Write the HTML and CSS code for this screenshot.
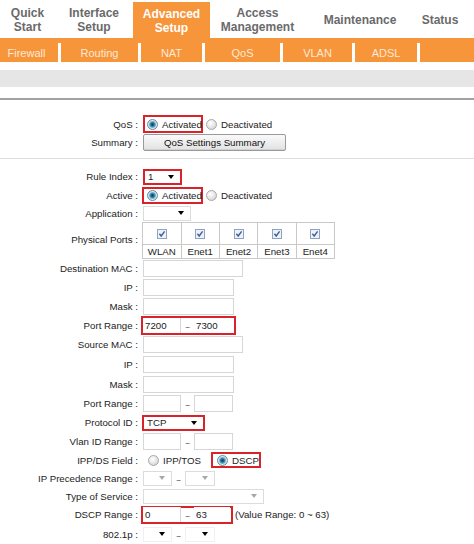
FILE: index.html
```html
<!DOCTYPE html>
<html>
<head>
<meta charset="utf-8">
<link rel="stylesheet" href="styles.css">
</head>
<body>
<div class="tabs">
  <div class="tab t1">Quick<br>Start</div>
  <div class="tab t2">Interface<br>Setup</div>
  <div class="tab t3 active">Advanced<br>Setup</div>
  <div class="tab t4">Access<br>Management</div>
  <div class="tab t5">Maintenance</div>
  <div class="tab t6">Status</div>
</div>
<div class="sub">
  <div class="si s1">Firewall</div><span class="sep"></span>
  <div class="si s2">Routing</div><span class="sep"></span>
  <div class="si s3">NAT</div><span class="sep"></span>
  <div class="si s4">QoS</div><span class="sep"></span>
  <div class="si s5">VLAN</div><span class="sep"></span>
  <div class="si s6">ADSL</div><span class="sep"></span>
  <div class="si s7"></div>
</div>
<div class="graybar"></div>
<div class="rule"></div>

<div class="form">
  <div class="row h18">
    <div class="lab">QoS :</div>
    <div class="val">
      <span class="rb rb-qos"><span class="radio on"></span><span class="rt">Activated</span></span>
      <span class="radio off ml3"></span><span class="rt">Deactivated</span>
    </div>
  </div>
  <div class="row h19">
    <div class="lab">Summary :</div>
    <div class="val"><button class="btn">QoS Settings Summary</button></div>
  </div>
  <div class="hr"></div>
  <div class="row h19">
    <div class="lab">Rule Index :</div>
    <div class="val">
      <span class="rb rb-idx"><span class="sel w35 nob"><span class="st">1</span><span class="arr"></span></span></span>
    </div>
  </div>
  <div class="row h19">
    <div class="lab">Active :</div>
    <div class="val">
      <span class="rb rb-act"><span class="radio on"></span><span class="rt">Activated</span></span>
      <span class="radio off ml3"></span><span class="rt">Deactivated</span>
    </div>
  </div>
  <div class="row h16">
    <div class="lab">Application :</div>
    <div class="val"><span class="sel w48 m2"><span class="st"></span><span class="arr"></span></span></div>
  </div>
  <div class="row h37">
    <div class="lab">Physical Ports :</div>
    <div class="val top1">
      <table class="ports">
        <tr class="cbr">
          <td><svg class="cb" width="10" height="10" viewBox="0 0 10 10"><rect x="0.5" y="0.5" width="9" height="9" fill="#eef2f8" stroke="#8ea3be"/><path d="M2.4 4.8 L4.2 7 L7.6 2.4" stroke="#3b5f9e" stroke-width="1.4" fill="none"/></svg></td>
          <td><svg class="cb" width="10" height="10" viewBox="0 0 10 10"><rect x="0.5" y="0.5" width="9" height="9" fill="#eef2f8" stroke="#8ea3be"/><path d="M2.4 4.8 L4.2 7 L7.6 2.4" stroke="#3b5f9e" stroke-width="1.4" fill="none"/></svg></td>
          <td><svg class="cb" width="10" height="10" viewBox="0 0 10 10"><rect x="0.5" y="0.5" width="9" height="9" fill="#eef2f8" stroke="#8ea3be"/><path d="M2.4 4.8 L4.2 7 L7.6 2.4" stroke="#3b5f9e" stroke-width="1.4" fill="none"/></svg></td>
          <td><svg class="cb" width="10" height="10" viewBox="0 0 10 10"><rect x="0.5" y="0.5" width="9" height="9" fill="#eef2f8" stroke="#8ea3be"/><path d="M2.4 4.8 L4.2 7 L7.6 2.4" stroke="#3b5f9e" stroke-width="1.4" fill="none"/></svg></td>
          <td><svg class="cb" width="10" height="10" viewBox="0 0 10 10"><rect x="0.5" y="0.5" width="9" height="9" fill="#eef2f8" stroke="#8ea3be"/><path d="M2.4 4.8 L4.2 7 L7.6 2.4" stroke="#3b5f9e" stroke-width="1.4" fill="none"/></svg></td>
        </tr>
        <tr class="lbr">
          <td>WLAN</td><td>Enet1</td><td>Enet2</td><td>Enet3</td><td>Enet4</td>
        </tr>
      </table>
    </div>
  </div>
  <div class="row h20">
    <div class="lab">Destination MAC :</div>
    <div class="val"><span class="inp w100 m2"></span></div>
  </div>
  <div class="row h19">
    <div class="lab">IP :</div>
    <div class="val"><span class="inp w91 m2"></span></div>
  </div>
  <div class="row h19">
    <div class="lab">Mask :</div>
    <div class="val"><span class="inp w91 m2"></span></div>
  </div>
  <div class="row h18">
    <div class="lab">Port Range :</div>
    <div class="val">
      <span class="rb rb-port"><span class="inp w38 in">7200</span><span class="tl">~</span><span class="inp w39 in">7300</span></span>
    </div>
  </div>
  <div class="row h20">
    <div class="lab">Source MAC :</div>
    <div class="val"><span class="inp w100 m2"></span></div>
  </div>
  <div class="row h20">
    <div class="lab">IP :</div>
    <div class="val"><span class="inp w91 m2"></span></div>
  </div>
  <div class="row h20">
    <div class="lab">Mask :</div>
    <div class="val"><span class="inp w91 m2"></span></div>
  </div>
  <div class="row h19">
    <div class="lab">Port Range :</div>
    <div class="val"><span class="inp w38 m2"></span><span class="tl">~</span><span class="inp w39"></span></div>
  </div>
  <div class="row h19">
    <div class="lab">Protocol ID :</div>
    <div class="val">
      <span class="rb rb-proto"><span class="sel w59 nob"><span class="st">TCP</span><span class="arr"></span></span></span>
    </div>
  </div>
  <div class="row h19">
    <div class="lab">Vlan ID Range :</div>
    <div class="val"><span class="inp w38 m2"></span><span class="tl">~</span><span class="inp w39"></span></div>
  </div>
  <div class="row h18">
    <div class="lab">IPP/DS Field :</div>
    <div class="val">
      <span class="radio off ml9"></span><span class="rt">IPP/TOS</span>
      <span class="rb rb-dscp"><span class="radio on"></span><span class="rt">DSCP</span></span>
    </div>
  </div>
  <div class="row h18">
    <div class="lab">IP Precedence Range :</div>
    <div class="val">
      <span class="sel w28 m2"><span class="st"></span><span class="arr gray"></span></span><span class="tl">~</span><span class="sel w30 m0"><span class="st"></span><span class="arr gray"></span></span>
    </div>
  </div>
  <div class="row h18">
    <div class="lab">Type of Service :</div>
    <div class="val"><span class="sel w121 m2"><span class="st"></span><span class="arr gray"></span></span></div>
  </div>
  <div class="row h19">
    <div class="lab">DSCP Range :</div>
    <div class="val">
      <span class="rb rb-dscpr"><span class="inp w38 in">0</span><span class="tl">~</span><span class="inp w36 in">63</span></span><span class="note">(Value Range: 0 ~ 63)</span>
    </div>
  </div>
  <div class="row h20">
    <div class="lab">802.1p :</div>
    <div class="val">
      <span class="sel w28 m2 faint"><span class="st"></span><span class="arr"></span></span><span class="tl">~</span><span class="sel w30 m0 faint"><span class="st"></span><span class="arr"></span></span>
    </div>
  </div>
</div>
</body>
</html>
```

FILE: styles.css
```css
html, body {
  margin: 0;
  padding: 0;
  background: #fff;
}
body {
  font-family: "Liberation Sans", Arial, sans-serif;
  width: 474px;
  height: 544px;
  overflow: hidden;
}

/* top tabs */
.tabs {
  display: flex;
  height: 38px;
}
.tab {
  display: flex;
  align-items: center;
  justify-content: center;
  text-align: center;
  font-weight: bold;
  font-size: 12px;
  line-height: 14px;
  color: #6a6a6a;
  padding-top: 1px;
  box-sizing: border-box;
}
.t1 { width: 55px; }
.t2 { width: 78px; }
.t3 { width: 77px; }
.t4 { width: 95px; }
.t5 { width: 110px; }
.t6 { width: 50px; }
.tab.active {
  background: #f7953b;
  color: #fff;
  margin-top: 2px;
  height: 36px;
}

/* sub bar */
.sub {
  display: flex;
  height: 24px;
  background: #f7953b;
}
.si {
  display: flex;
  align-items: center;
  justify-content: center;
  padding-top: 5px;
  box-sizing: border-box;
  color: #fde9d6;
  font-size: 11px;
}
.sep {
  width: 3px;
  height: 19px;
  margin-top: 5px;
  background: #fff;
}
.s1 { width: 58px; padding-right: 5px; }
.s2 { width: 77px; }
.s3 { width: 61px; }
.s4 { width: 75px; }
.s5 { width: 69px; }
.s6 { width: 62px; }
.s7 { flex: 1; }

.graybar {
  height: 17px;
  margin-top: 8px;
  background: #e6e6e6;
}
.rule {
  height: 2px;
  margin-top: 11px;
  background: #a2a2a2;
}

/* form */
.form {
  margin-top: 15px;
  font-size: 9.7px;
  color: #222;
}
.row {
  display: flex;
  align-items: center;
}
.h16 { height: 16px; }
.h18 { height: 18px; }
.h19 { height: 19px; }
.h20 { height: 20px; }
.h37 { height: 37px; align-items: flex-start; }
.h37 .lab { align-self: center; }
.lab {
  width: 141px;
  box-sizing: border-box;
  padding-right: 3px;
  text-align: right;
  white-space: nowrap;
}
.val {
  display: flex;
  align-items: center;
}
.top1 { margin-top: 1px; }

.hr {
  height: 1px;
  background: #dedede;
  margin: 6px 0 8px;
}

.rb {
  display: inline-flex;
  align-items: center;
  border: 2px solid #d8232a;
  box-sizing: border-box;
}
.rb-qos { width: 60px; height: 18px; margin-left: 2px; padding-left: 2px; }
.rb-act { width: 61px; height: 17px; margin-left: 1px; padding-left: 3px; }
.rb-idx { width: 39px; height: 16px; margin-left: 2px; }
.rb-port { width: 95px; height: 19px; }
.rb-proto { width: 63px; height: 16px; margin-left: 1px; }
.rb-dscp { width: 50px; height: 16px; margin-left: 10px; padding-left: 4px; }
.rb-dscpr { width: 92px; height: 18px; }

.radio {
  display: inline-block;
  width: 9px;
  height: 9px;
  border-radius: 50%;
  border: 1px solid #a8a8a8;
  background: radial-gradient(circle at 40% 35%, #ffffff 0, #e9e9e9 45%, #c9c9c9 100%);
  flex: none;
}
.radio.on {
  border-color: #6f8a99;
  background: radial-gradient(circle at 50% 50%, #0b3f5a 0, #1e6c91 1.6px, #6fb3d3 3px, #dfe9ee 4px, #c5c5c5 5px);
}
.rt {
  margin-left: 4px;
  white-space: nowrap;
}
.ml3 { margin-left: 3px; }
.ml9 { margin-left: 7px; }

.btn {
  margin-left: 2px;
  width: 143px;
  height: 17px;
  padding: 0;
  font-family: "Liberation Sans", Arial, sans-serif;
  font-size: 9.7px;
  color: #111;
  border: 1px solid #9a9a9a;
  border-radius: 2px;
  background: linear-gradient(#fafafa, #e2e2e2);
  box-shadow: inset 0 -1px 0 #d0d0d0;
}

.sel {
  display: inline-flex;
  align-items: center;
  box-sizing: border-box;
  height: 15px;
  border: 1px solid #dcdcdc;
  background: #fff;
}
.sel.nob { border: none; height: 12px; }
.sel.faint { border-color: #f0f0f0; }
.sel .st {
  flex: 1;
  padding-left: 3px;
}
.arr {
  width: 0;
  height: 0;
  border-left: 3.5px solid transparent;
  border-right: 3.5px solid transparent;
  border-top: 4px solid #000;
  margin-right: 6px;
}
.arr.gray { border-top-color: #a8a8a8; }
.m2 { margin-left: 2px; }
.m0 { margin-left: 0; }
.w28 { width: 29px; }
.w30 { width: 30px; }
.w35 { width: 35px; }
.w48 { width: 48px; }
.w59 { width: 59px; }
.w121 { width: 121px; }

.inp {
  display: inline-flex;
  align-items: center;
  box-sizing: border-box;
  height: 17px;
  border: 1px solid #d6d6d6;
  padding-left: 2px;
  background: #fff;
}
.inp.in { height: 15px; border: none; border-right: 1px solid #d6d6d6; }
.inp.in:last-child { border-right: none; }
.w36 { width: 36px; }
.w38 { width: 38px; }
.w39 { width: 39px; }
.w91 { width: 91px; }
.w100 { width: 100px; }
.tl {
  width: 13px;
  text-align: center;
  font-size: 8px;
  padding-top: 4px;
}
.note { margin-left: 2px; white-space: nowrap; }

.ports {
  margin-left: 1px;
  border-collapse: collapse;
  width: 193px;
}
.ports td {
  border: 1px solid #c9c9c9;
  width: 38px;
  padding: 0;
  text-align: center;
}
.cbr td { height: 21px; }
.lbr td { height: 13px; line-height: 12px; }
.cb { display: block; margin: 0 auto; }
```
